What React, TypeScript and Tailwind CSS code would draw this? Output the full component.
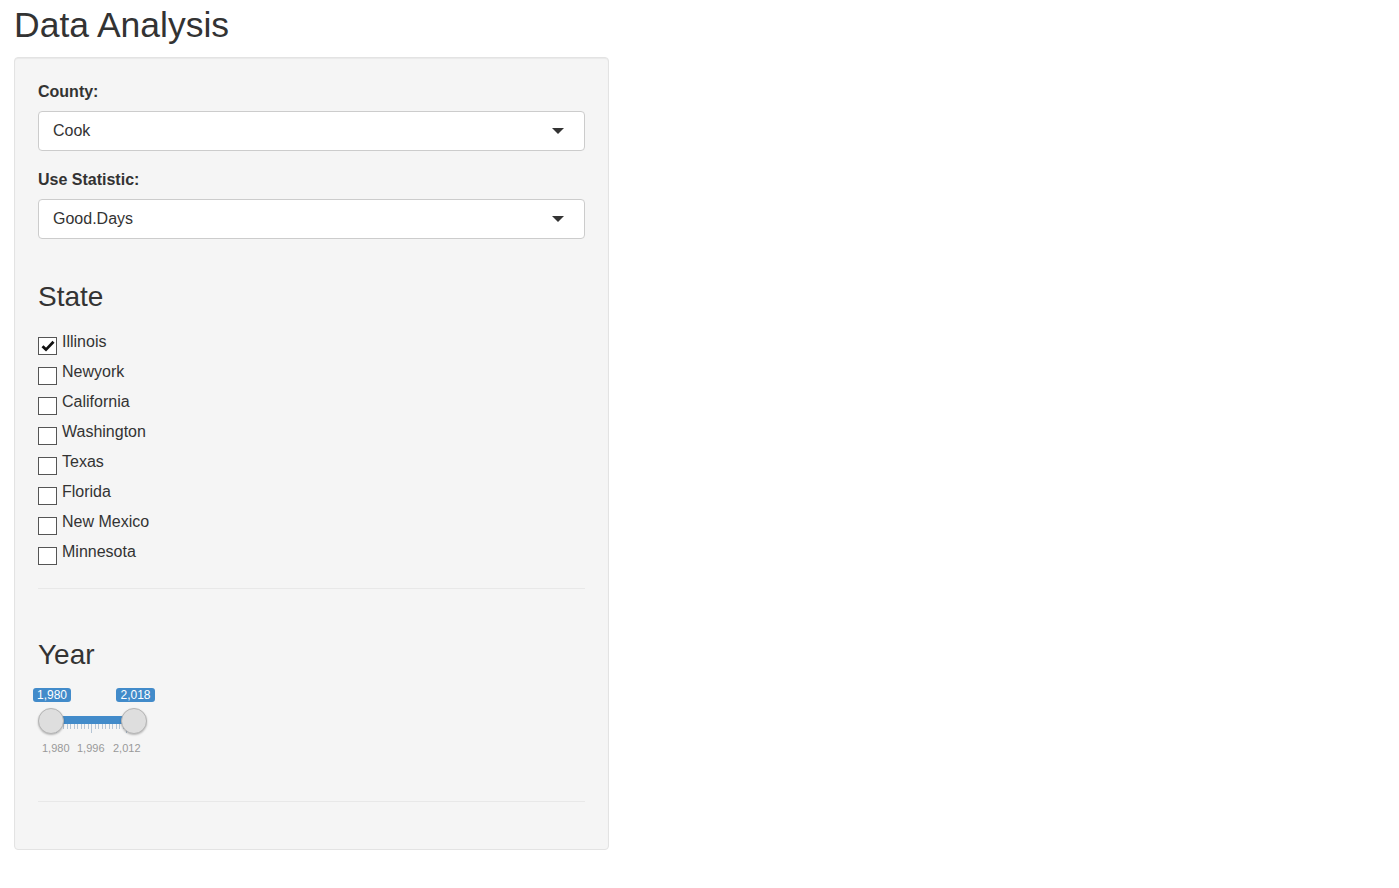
import React from 'react';

const states = ['Illinois', 'Newyork', 'California', 'Washington', 'Texas', 'Florida', 'New Mexico', 'Minnesota'];

function SelectBox({ value }: { value: string }) {
  return (
    <div className="flex h-[40px] items-center justify-between rounded-[4px] border border-[#cccccc] bg-white pl-[14px] pr-[20px] text-[16px] text-[#333333]">
      <span>{value}</span>
      <span className="h-0 w-0 border-x-[6px] border-t-[6px] border-x-transparent border-t-[#333333]" />
    </div>
  );
}

function Check({ checked, label }: { checked: boolean; label: string }) {
  return (
    <div className="flex h-[30px] items-start">
      <span className="mt-[6px] mr-[5px] flex h-[18px] w-[19px] items-center justify-center border border-[#555555] bg-white">
        {checked && (
          <svg width="14" height="12" viewBox="0 0 14 12">
            <path d="M1.5 6.2 L5 9.6 L12.5 1.8" fill="none" stroke="#111" strokeWidth="2.8" strokeLinejoin="miter" />
          </svg>
        )}
      </span>
      <span className="mt-[1px] text-[16px] leading-[20px] text-[#333333]">{label}</span>
    </div>
  );
}

function YearSlider() {
  // grid ticks: a major every 10 small steps, under the range bar
  const ticks: { x: number; major: boolean }[] = [];
  for (let i = 0; i <= 22; i++) {
    ticks.push({ x: 26 + i * 3.5, major: i % 10 === 0 });
  }
  return (
    <div className="relative h-[70px] w-[130px]">
      <div className="absolute left-[3px] top-[2px] h-[14px] w-[38px] rounded-[3px] bg-[#428bca] text-center text-[12px] leading-[14px] text-white">
        1,980
      </div>
      <div className="absolute left-[86px] top-[2px] h-[14px] w-[39px] rounded-[3px] bg-[#428bca] text-center text-[12px] leading-[14px] text-white">
        2,018
      </div>
      <svg className="absolute left-0 top-[38px]" width="130" height="10">
        {ticks.map((t) => (
          <line
            key={t.x}
            x1={Math.round(t.x) + 0.5}
            x2={Math.round(t.x) + 0.5}
            y1={0}
            y2={t.major ? 9 : 5}
            stroke="#b4c4d4"
            strokeWidth="1"
          />
        ))}
      </svg>
      <div className="absolute left-[21px] top-[30px] h-[8px] w-[83px] bg-[#428bca]" />
      <div className="absolute left-[8px] top-[22px] h-[26px] w-[26px] rounded-full border border-[#b5b5b5] bg-[#dedede] shadow-[0_1px_2px_rgba(0,0,0,0.25)]" />
      <div className="absolute left-[91px] top-[22px] h-[26px] w-[26px] rounded-full border border-[#b5b5b5] bg-[#dedede] shadow-[0_1px_2px_rgba(0,0,0,0.25)]" />
      <div className="absolute left-[12px] top-[56px] flex text-[11px] leading-[13px] text-[#999999]">
        <span className="w-[27px] text-center">1,980</span>
        <span className="ml-[8px] w-[27px] text-center">1,996</span>
        <span className="ml-[9px] w-[27px] text-center">2,012</span>
      </div>
    </div>
  );
}

export default function App() {
  return (
    <div className="min-h-[888px] bg-white px-[14px] font-['Liberation_Sans',Arial,sans-serif] text-[#333333]">
      <h1 className="mb-[13px] pt-[6px] text-[35.5px] font-normal leading-[38px]">Data Analysis</h1>

      <div className="w-[595px] rounded-[4px] border border-[#e3e3e3] bg-[#f5f5f5] px-[23px] pb-[47px] pt-[24px] shadow-[inset_0_1px_1px_rgba(0,0,0,0.05)]">
        <div className="mb-[9px] text-[16px] font-bold leading-[20px]">County:</div>
        <SelectBox value="Cook" />

        <div className="mb-[9px] mt-[19px] text-[16px] font-bold leading-[20px]">Use Statistic:</div>
        <SelectBox value="Good.Days" />

        <h3 className="mt-[42px] text-[28px] font-normal leading-[31px]">State</h3>
        <div className="mt-[19px]">
          {states.map((s, i) => (
            <Check key={s} label={s} checked={i === 0} />
          ))}
        </div>

        <hr className="mt-[17px] border-0 border-t border-[#e8e8e8]" />

        <h3 className="mt-[50px] text-[28px] font-normal leading-[31px]">Year</h3>
        <div className="-ml-[8px] mt-[16px]">
          <YearSlider />
        </div>

        <hr className="mt-[45px] border-0 border-t border-[#e8e8e8]" />
      </div>
    </div>
  );
}
